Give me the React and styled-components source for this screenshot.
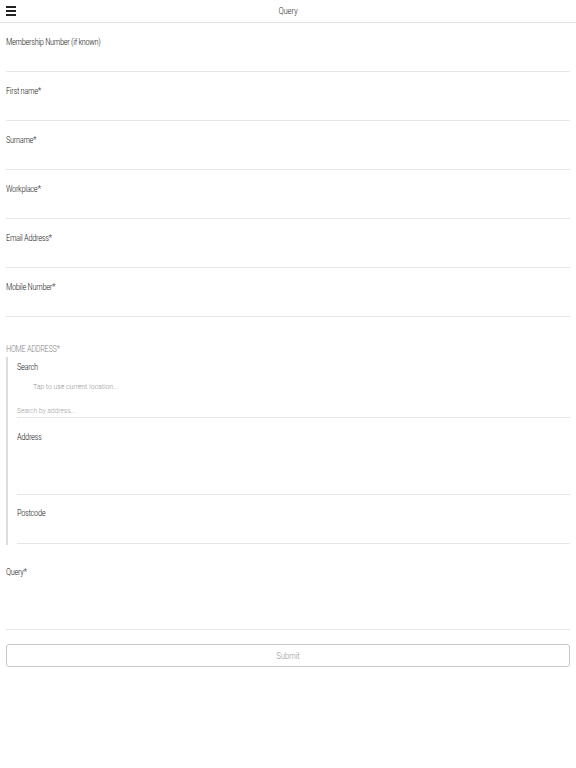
import React from 'react';
import styled, { createGlobalStyle } from 'styled-components';

const GlobalStyle = createGlobalStyle`
  body {
    margin: 0;
    background: #fff;
    font-family: "Roboto Condensed", Roboto, "Liberation Sans", sans-serif;
    font-stretch: condensed;
    font-weight: 300;
    color: #333;
  }
`;

const Header = styled.header`
  height: 22px;
  border-bottom: 1px solid #e4e4e4;
  display: flex;
  align-items: center;
  padding: 0 6px;
`;

const Title = styled.h1`
  flex: 1;
  margin: 0;
  text-align: center;
  font-size: 9px;
  font-weight: 300;
  letter-spacing: -0.3px;
  color: #333;
`;

const MenuButton = styled.button`
  border: 0;
  background: none;
  padding: 0;
  width: 10px;
  display: flex;
  flex-direction: column;
  gap: 2px;

  span {
    height: 2px;
    background: #222;
  }
`;

const Spacer = styled.div`
  width: 10px;
`;

const Form = styled.form`
  padding: 0 6px;
`;

const Field = styled.div`
  padding-top: ${(p) => p.$top || 14}px;
  border-bottom: 1px solid #e6e6e6;
  height: ${(p) => p.$height || 34}px;
`;

const Label = styled.label`
  display: block;
  font-size: 8.5px;
  font-weight: 300;
  letter-spacing: -0.35px;
  color: ${(p) => (p.$muted ? '#888' : '#222')};
  line-height: 10px;
`;

const AddressGroup = styled.div`
  padding-top: 27px;
`;

const AddressBody = styled.div`
  border-left: 2px solid #ddd;
  margin-top: 3px;
  padding-top: 5px;
  padding-left: 9px;
  padding-bottom: 1px;
`;

const Hint = styled.div`
  font-size: 8px;
  letter-spacing: -0.1px;
  color: #999;
  padding: 10px 0 0 16px;
  line-height: 10px;
`;

const SearchInput = styled.div`
  font-size: 8px;
  letter-spacing: -0.2px;
  color: #aaa;
  margin-top: 14px;
  line-height: 10px;
  padding-bottom: 1px;
  border-bottom: 1px solid #e6e6e6;
`;

const SubmitButton = styled.button`
  display: block;
  width: 100%;
  margin-top: 14px;
  height: 23px;
  border: 1px solid #c8c8c8;
  border-radius: 3px;
  background: #fff;
  color: #999;
  font-family: inherit;
  font-stretch: condensed;
  font-weight: 300;
  font-size: 9px;
  letter-spacing: -0.2px;
`;

const fields = [
  'Membership Number (if known)',
  'First name*',
  'Surname*',
  'Workplace*',
  'Email Address*',
  'Mobile Number*',
];

export default function App() {
  return (
    <>
      <GlobalStyle />
      <Header>
        <MenuButton>
          <span />
          <span />
          <span />
        </MenuButton>
        <Title>Query</Title>
        <Spacer />
      </Header>
      <Form>
        {fields.map((f) => (
          <Field key={f}>
            <Label>{f}</Label>
          </Field>
        ))}
        <AddressGroup>
          <Label $muted>HOME ADDRESS*</Label>
          <AddressBody>
            <Label>Search</Label>
            <Hint>Tap to use current location...</Hint>
            <SearchInput>Search by address...</SearchInput>
            <Field $top={14} $height={62}>
              <Label>Address</Label>
            </Field>
            <Field $top={13} $height={35}>
              <Label>Postcode</Label>
            </Field>
          </AddressBody>
        </AddressGroup>
        <Field $top={22} $height={62}>
          <Label>Query*</Label>
        </Field>
        <SubmitButton type="button">Submit</SubmitButton>
      </Form>
    </>
  );
}
